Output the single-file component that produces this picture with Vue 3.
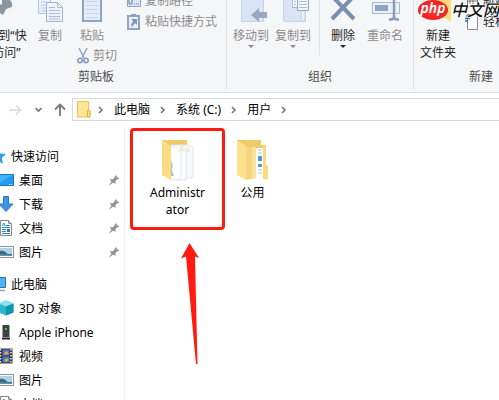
<script setup>
import { ref } from "vue"

const crumbs = ["此电脑", "系统 (C:)", "用户"]

const quickAccess = [
    { name: "桌面", icon: "desktop" },
    { name: "下载", icon: "download" },
    { name: "文档", icon: "doc" },
    { name: "图片", icon: "picture" }
]

const thisPc = [
    { name: "3D 对象", icon: "cube" },
    { name: "Apple iPhone", icon: "phone" },
    { name: "视频", icon: "video" },
    { name: "图片", icon: "picture" },
    { name: "文档", icon: "doc" }
]

const sections = [
    { name: "快速访问", icon: "star", items: quickAccess, pinned: true },
    { name: "此电脑", icon: "pc", items: thisPc, pinned: false }
]

const folders = [
    { name: "Administrator", icon: "docs" },
    { name: "公用", icon: "public" }
]

const selected = ref("Administrator")
</script>

<template>
    <div class="explorer">
        <header class="ribbon">
            <section class="group clipboard">
                <div class="tools">
                    <button class="tool wide">
                        <svg class="tool-icon" viewBox="0 0 40 27">
                            <path d="M21 0h8l2 3v4l-6 2-3 6-3-2-6 6 4-8-4-4 8-3z" fill="#8c969f" />
                        </svg>
                        <span>固定到“快速访问”</span>
                    </button>
                    <button class="tool" disabled>
                        <svg class="tool-icon" viewBox="0 0 40 27">
                            <path d="M8.500 -1v14.500h12V-1z" fill="#eaf1fa" stroke="#b3c3dc" />
                            <path d="M11 2h6M11 5h6M11 8h6M11 11h6" stroke="#b9cae3" />
                            <path d="M16.500 2.500h11l5 5v14h-16z" fill="#edf3fb" stroke="#9fb2d1" />
                            <path d="M27.500 2.500v5h5M19 7.500h6M19 10.500h11M19 13.500h11M19 16.500h11M19 19h11" fill="none" stroke="#a9bddb" />
                        </svg>
                        <span>复制</span>
                    </button>
                    <div class="stack">
                        <button class="tool" disabled>
                            <svg class="tool-icon" viewBox="0 0 40 27">
                                <path d="M11 -2h18v23H11z" fill="#e4edf9" stroke="#8ea3c6" stroke-width="2" />
                                <path d="M14 1.500h12M14 5.500h12M14 9.500h12M14 13.500h12M14 17.500h12" stroke="#c5d4e9" />
                            </svg>
                            <span>粘贴</span>
                        </button>
                        <button class="small cut" disabled>
                            <svg width="12" height="16" viewBox="0 0 12 16">
                                <path d="M2 0l5 10M10 0L5 10" stroke="#9aa9c0" stroke-width="1.600" />
                                <circle cx="3" cy="12.500" r="2.200" fill="none" stroke="#8199c4" stroke-width="1.500" />
                                <circle cx="9" cy="12.500" r="2.200" fill="none" stroke="#8199c4" stroke-width="1.500" />
                            </svg>
                            <span>剪切</span>
                        </button>
                    </div>
                    <div class="small-list">
                        <button class="small" disabled>
                            <svg width="14" height="16" viewBox="0 0 14 16">
                                <path d="M0.500 1.500h13v12H.5z" fill="#dce7f6" stroke="#8ea3c6" />
                                <path d="M2 7v4h3V7M7 11h1M9 11h1M11 11h1" fill="none" stroke="#667fa9" />
                            </svg>
                            <span>复制路径</span>
                        </button>
                        <button class="small" disabled>
                            <svg width="14" height="16" viewBox="0 0 14 16">
                                <path d="M1 2h11v13H1z" fill="#e8f0fa" stroke="#8fa2c2" stroke-width="2" />
                                <path d="M4 0h5v3H4z" fill="#8fa2c2" />
                                <path d="M4 5h6v6L8 9l-3 4l-1-2 2-4z" fill="#7d94bb" />
                            </svg>
                            <span>粘贴快捷方式</span>
                        </button>
                    </div>
                </div>
                <div class="group-name">剪贴板</div>
            </section>

            <section class="group organize">
                <div class="tools">
                    <button class="tool" disabled>
                        <svg class="tool-icon" viewBox="0 0 40 27">
                            <path d="M10.500 -1v22.500h22V-1z" fill="#d9e5f4" stroke="#c4d4e8" />
                            <path d="M28 12h4v9h-4z" fill="#e8f0f9" stroke="#c4d4e8" />
                            <path d="M20 15l8-7v4h8v6h-8v4z" fill="#98a8c3" />
                        </svg>
                        <span>移动到</span>
                        <i class="caret"></i>
                    </button>
                    <button class="tool" disabled>
                        <svg class="tool-icon" viewBox="0 0 40 27">
                            <path d="M10.500 -1v22.500h22V-1z" fill="#d9e5f4" stroke="#c4d4e8" />
                            <path d="M28 11h4v10h-4z" fill="#e8f0f9" stroke="#c4d4e8" />
                            <path d="M19.500 -1v8.500h8V-1z" fill="#f3f7fc" stroke="#a9bddb" />
                            <path d="M24.500 -1v11.500h11V-1z" fill="#f3f7fc" stroke="#93a7c9" />
                            <path d="M26 1.500h8M26 4.500h8M26 7.500h8M21 1.500h2M21 4.500h2" stroke="#a9bddb" />
                        </svg>
                        <span>复制到</span>
                        <i class="caret"></i>
                    </button>
                    <div class="divider"></div>
                    <button class="tool">
                        <svg class="tool-icon" viewBox="0 0 40 27">
                            <path d="M9 -4l22 23M31 -4L9 19" stroke="#7c8db2" stroke-width="4" />
                        </svg>
                        <span>删除</span>
                        <i class="caret"></i>
                    </button>
                    <button class="tool" disabled>
                        <svg class="tool-icon" viewBox="0 0 40 27">
                            <path d="M7.500 2.500h27v11h-27z" fill="#e9f0f9" stroke="#a8b9d4" />
                            <path d="M10 5h13v6H10z" fill="#8fa3c7" />
                            <path d="M29 0v17M24 19.500h2q3 0 3-3q0 3 3 3h2" fill="none" stroke="#899bbd" stroke-width="2.500" />
                        </svg>
                        <span>重命名</span>
                    </button>
                </div>
                <div class="group-name">组织</div>
            </section>

            <section class="group create">
                <div class="tools">
                    <button class="tool">
                        <svg class="tool-icon" viewBox="0 0 40 27">
                            <path d="M10 0h23v22l-6-4H10z" fill="#fbdc7d" />
                        </svg>
                        <span>新建<br>文件夹</span>
                    </button>
                    <div class="small-list">
                        <button class="small">
                            <svg width="14" height="16" viewBox="0 0 14 16">
                                <path d="M2.500 1.500h10v12h-10z" fill="#fff" stroke="#777" />
                                <path d="M5 4v7M8 4v7M2 8h10" stroke="#777" />
                            </svg>
                            <span>新建项目</span>
                        </button>
                        <button class="small">
                            <svg width="14" height="16" viewBox="0 0 14 16">
                                <path d="M2.500 0.500h10v15h-10z" fill="#fff" stroke="#8a8a8a" />
                                <path d="M1 2h5M0 4.500h5M0 7h3" stroke="#2a6dbb" stroke-width="1.400" />
                            </svg>
                            <span>轻松访问</span>
                        </button>
                    </div>
                </div>
                <div class="group-name">新建</div>
            </section>

            <div class="watermark">
                <span class="php">php</span>
                <span class="site">中文网</span>
            </div>
        </header>

        <nav class="address">
            <button class="nav-btn forward" aria-label="前进" disabled>
                <svg width="13" height="12" viewBox="0 0 13 12"><path d="M0 6h11M7 1.500L11.500 6L7 10.500" fill="none" stroke="#d8d8d8" stroke-width="1.500" /></svg>
            </button>
            <button class="nav-btn recent" aria-label="最近浏览的位置">
                <svg width="7" height="6" viewBox="0 0 7 6"><path d="M.5 1l3 3l3-3" fill="none" stroke="#777" stroke-width="1.600" /></svg>
            </button>
            <button class="nav-btn up" aria-label="上移">
                <svg width="12" height="13" viewBox="0 0 12 13"><path d="M6 13V1.500M1 6.500l5-5l5 5" fill="none" stroke="#777" stroke-width="1.800" /></svg>
            </button>
            <div class="path">
                <svg class="path-icon" width="14" height="17" viewBox="0 0 14 17">
                    <path d="M.5 .5h11v8.500l1.500 1v6H.5z" fill="#fde594" stroke="#e9c558" />
                    <path d="M10.500 16V9.500h2.500V16z" fill="#fbdb74" stroke="#dfb540" />
                </svg>
                <svg class="sep" width="6" height="8" viewBox="0 0 6 8"><path d="M1 1l3 3l-3 3" fill="none" stroke="#777" stroke-width="1.600" /></svg>
                <template v-for="crumb in crumbs" :key="crumb">
                    <a href="#" class="crumb">{{ crumb }}</a>
                    <svg class="sep" width="6" height="8" viewBox="0 0 6 8"><path d="M1 1l3 3l-3 3" fill="none" stroke="#777" stroke-width="1.600" /></svg>
                </template>
            </div>
        </nav>

        <div class="body">
            <aside class="sidebar">
                <div v-for="section in sections" :key="section.name" class="section">
                    <a href="#" class="entry root">
                        <svg v-if="section.icon === 'star'" class="root-icon" viewBox="0 0 16 16">
                            <path d="M8 0l2.200 5.500l5.800 .5l-4.300 4l1.300 6L8 12.500L3 16l1.300-6L0 6l5.800-.5z" fill="#2d9bf0" />
                        </svg>
                        <svg v-else class="root-icon" viewBox="0 0 16 16">
                            <path d="M.5 1.500h15v10H.5z" fill="#49b5f5" stroke="#3a6d93" />
                            <path d="M3 14.500h12" stroke="#8fa0ae" stroke-width="1.500" />
                        </svg>
                        <span>{{ section.name }}</span>
                    </a>
                    <a v-for="item in section.items" :key="item.name" href="#" class="entry">
                        <svg class="entry-icon" viewBox="0 0 16 16">
                            <g v-if="item.icon === 'desktop'">
                                <path d="M.5 2.500h15v11H.5z" fill="#1f9bf5" stroke="#1677bd" />
                                <path d="M1 3h14L1 11z" fill="#42b2fb" />
                                <path d="M11 12.500h1M13 12.500h1" stroke="#fff" />
                            </g>
                            <path v-else-if="item.icon === 'download'" d="M5.500 .5h5V8H15l-7 7.500L1 8h4.500z" fill="#3d95e4" stroke="#2b7ac4" />
                            <g v-else-if="item.icon === 'doc'">
                                <path d="M2.500 .5h8l3 3v12h-11z" fill="#fff" stroke="#8b8b8b" />
                                <path d="M10.500 .5v3h3" fill="none" stroke="#8b8b8b" />
                                <path d="M4 6l2-3l1 3M8 5.500h4M4 7.500h8M4 9.500h4M4 11.500h4M4 13.500h8" fill="none" stroke="#2390d0" />
                                <path d="M9 9h3v3H9z" fill="#54717b" />
                            </g>
                            <g v-else-if="item.icon === 'picture'">
                                <path d="M.5 2.500h15v11H.5z" fill="#fff" stroke="#8d969b" />
                                <path d="M2 4h12v8H2z" fill="#a8d3f3" />
                                <path d="M2 7q4-1 6 1.500t6 1V12H2z" fill="#426b68" />
                                <path d="M2 10.500h12V12H2z" fill="#5b93c4" />
                            </g>
                            <g v-else-if="item.icon === 'cube'">
                                <path d="M8 .5l7.500 3v9L8 15.500L.5 12.500v-9z" fill="#28b7cd" />
                                <path d="M8 .5l7.500 3L8 6.500L.5 3.500z" fill="#8ce3ef" />
                                <path d="M8 6.500l7.500-3v9L8 15.500z" fill="#1295ad" />
                            </g>
                            <g v-else-if="item.icon === 'phone'">
                                <path d="M4.500 1h7v12h-7z" fill="#3e4144" />
                                <path d="M4 14.500h8" stroke="#222" stroke-width="2" />
                                <path d="M7 4h2v2H7z" fill="#35e03a" />
                            </g>
                            <g v-else>
                                <path d="M1 .5h13.500v15H1z" fill="#35363b" />
                                <path d="M4.500 1.500h7v6h-7z" fill="#536ec4" />
                                <path d="M4.500 8.500h7v6h-7z" fill="#3980d1" />
                                <path d="M6 5l3-2l2 3l-4 1zM6 12l3-2l2 2l-3 2z" fill="#e4a935" />
                                <path d="M2.500 1v15M13 1v15" stroke="#e8e8e8" stroke-width="1.500" stroke-dasharray="1.500 1.500" />
                            </g>
                        </svg>
                        <span>{{ item.name }}</span>
                        <svg v-if="section.pinned" class="pin" width="12" height="12" viewBox="0 0 12 12">
                            <path d="M7 1l4 3.500l-1 1l-1-.2L7.500 7v3L5.500 8.500L1 11.500l2.500-4.200L1.500 5.200h3.300L7 3z" fill="#89949e" />
                        </svg>
                    </a>
                </div>
            </aside>

            <main class="files">
                <a
                    v-for="folder in folders"
                    :key="folder.name"
                    href="#"
                    class="file"
                    :class="{ marked: folder.name === selected }"
                    @click.prevent="selected = folder.name"
                >
                    <svg class="folder" viewBox="0 0 36 42">
                        <g v-if="folder.icon === 'docs'">
                            <path d="M2 1h25v7H6z" fill="#eecb68" />
                            <path d="M20 6h10l3 2v31H15z" fill="#f7f8f9" stroke="#e6e8ea" />
                            <path d="M11 6h10l5 6v29H11z" fill="#fcfcfc" stroke="#e0e2e4" />
                            <path d="M9 8h7l5 5v27H9z" fill="#fff" stroke="#e9ebec" />
                            <path d="M11 21l2 6l-1 4l2 6h-3z" fill="#bcc2c9" />
                            <path d="M20 6l5 6h-5zM27 6l3 7h-3" fill="#f3ead0" />
                            <path d="M2 1l9 6v34l-9-5z" fill="#fbdc81" />
                        </g>
                        <g v-else>
                            <path d="M2 1h24v5h3v30H6z" fill="#efcc69" />
                            <path d="M21 9h7v29h-7z" fill="#fff" />
                            <path d="M23 11h4M23 14h4M23 31h4M23 34h4" stroke="#a9c5de" />
                            <path d="M23 17h4v5h-4zM23 25h4v3h-4z" fill="#4a9ad3" />
                            <path d="M28 6h3v20l2 1v13h-5z" fill="#fadb7e" />
                            <path d="M11 8h10v31l-10 2z" fill="#f3d580" />
                            <path d="M17 8h4v31l-4 1z" fill="#fae19a" />
                            <path d="M2 1l9 6v34l-9-5z" fill="#fce08b" />
                        </g>
                    </svg>
                    <span class="file-name">{{ folder.name }}</span>
                </a>
                <svg class="arrow" width="18" height="121" viewBox="0 0 18 121">
                    <path d="M8.500 0L18 15l-4-1.500L16.500 121h-1.500L5 13.500L0 15.500z" fill="#ff1b10" />
                </svg>
            </main>
        </div>
    </div>
</template>

<style>
body {
    margin: 0;
}
</style>

<style scoped>
.explorer {
    display: flex;
    flex-direction: column;
    height: 100vh;
    overflow: hidden;
    background: #fff;
    color: #000;
    font-family: "Noto Sans", "Noto Sans CJK SC", sans-serif;
    font-size: 12px;
    line-height: 17px;
}

button {
    padding: 0;
    border: none;
    background: transparent;
    color: #262626;
    font: inherit;
}

button:disabled {
    color: #8c8c8c;
}

a {
    color: inherit;
    text-decoration: none;
}

/* 功能区 */
.ribbon {
    position: relative;
    display: flex;
    flex: none;
    height: 92px;
    overflow: hidden;
    background: #f5f6f7;
    border-bottom: 1px solid #d9dadb;
}

.group {
    display: flex;
    flex: none;
    flex-direction: column;
    height: 89px;
    border-right: 1px solid #e0e2e3;
}

.clipboard {
    width: 260px;
    margin-left: -34px;
}

.organize {
    width: 186px;
}

.create {
    width: 134px;
}

.tools {
    display: flex;
    height: 68px;
    padding-left: 3px;
}

.clipboard .tools {
    padding-left: 6px;
}

.tool {
    display: flex;
    flex: none;
    flex-direction: column;
    align-items: center;
    width: 42px;
    white-space: nowrap;
}

.wide {
    width: 57px;
    white-space: normal;
}

.tool-icon {
    flex: none;
    width: 40px;
    height: 27px;
}

.caret {
    border: 3px solid transparent;
    border-top-color: currentColor;
    border-bottom: none;
    margin-top: 1px;
}

.divider {
    width: 1px;
    height: 55px;
    margin: 0 2px 0 5px;
    background: #e0e2e3;
}

.stack {
    display: flex;
    flex-direction: column;
    gap: 3px;
    width: 50px;
}

.small {
    display: flex;
    align-items: center;
    gap: 4px;
    height: 21px;
    white-space: nowrap;
}

.cut {
    height: 17px;
    padding-left: 6px;
}

.small-list {
    margin: -10px 0 0 6px;
}

.group-name {
    height: 24px;
    color: #4c4c4c;
    line-height: 24px;
    text-align: center;
}

.watermark {
    position: absolute;
    top: 0;
    right: 0;
    display: flex;
    align-items: center;
    gap: 3px;
    height: 20px;
}

.php {
    width: 30px;
    height: 20px;
    border-radius: 50%;
    background: radial-gradient(#ff3a30, #e8141c);
    color: #fff;
    font-size: 14px;
    font-style: italic;
    font-weight: 600;
    line-height: 16px;
    text-align: center;
}

.site {
    color: #111;
    font-size: 16px;
    font-style: italic;
    font-weight: 500;
    text-shadow: 1px 0 #fff, -1px 0 #fff, 0 1px #fff;
}

/* 地址栏 */
.address {
    display: flex;
    flex: none;
    align-items: center;
    height: 23px;
    margin-top: 5px;
    padding-left: 9px;
}

.nav-btn {
    display: flex;
}

.recent {
    margin-left: 13px;
}

.up {
    margin: 0 6px 0 12px;
}

.path {
    display: flex;
    flex: 1;
    align-items: center;
    gap: 10px;
    box-sizing: border-box;
    height: 23px;
    padding-left: 4px;
    border: 1px solid #d9d9d9;
    border-right: none;
}

.path-icon {
    margin-right: -3px;
}

/* 主体 */
.body {
    display: flex;
    flex: 1;
    min-height: 0;
    padding-top: 7px;
}

.sidebar {
    flex: none;
    box-sizing: border-box;
    width: 125px;
    padding-top: 16px;
    overflow: hidden;
    border-right: 1px solid #f0f0f0;
}

.section {
    margin-bottom: 8px;
}

.entry {
    display: flex;
    align-items: center;
    gap: 5px;
    height: 24px;
    padding-right: 4px;
    white-space: nowrap;
}

.entry-icon,
.root-icon {
    flex: none;
    width: 16px;
    height: 16px;
    margin-left: -2px;
}

.root-icon {
    margin-left: -10px;
}

.pin {
    margin-left: auto;
}

.files {
    position: relative;
    display: flex;
    flex: 1;
    align-items: flex-start;
    padding-left: 5px;
}

.file {
    display: flex;
    flex-direction: column;
    align-items: center;
    box-sizing: border-box;
    width: 55px;
    padding-top: 11px;
}

.marked {
    width: 95px;
    height: 102px;
    padding-top: 8px;
    border: 3px solid #ff1b10;
    border-radius: 4px;
}

.folder {
    width: 36px;
    height: 42px;
    margin-bottom: 3px;
}

.file-name {
    max-width: 58px;
    text-align: center;
    word-break: break-all;
}

/* 指向选中文件夹的箭头 */
.arrow {
    position: absolute;
    top: 115px;
    left: 56px;
}
</style>
